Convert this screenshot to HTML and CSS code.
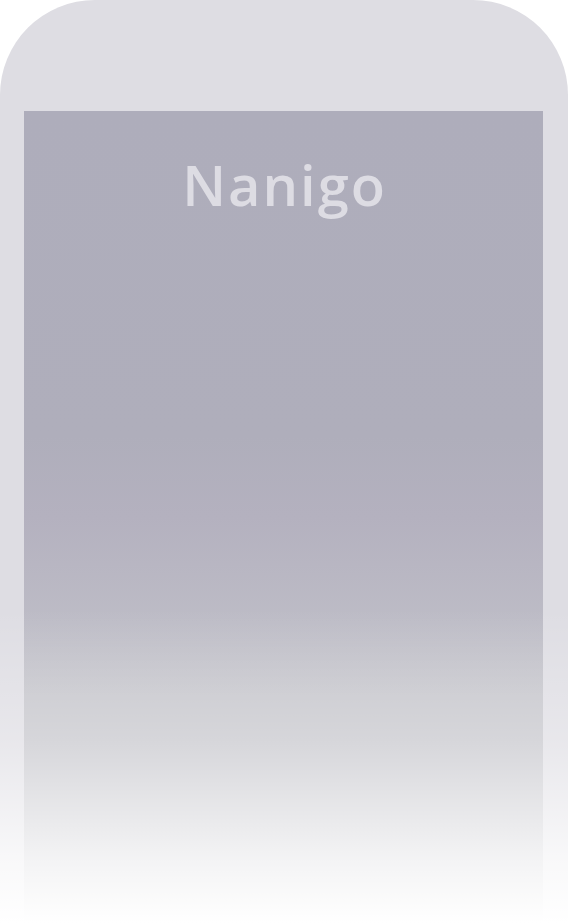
FILE: index.html
```html
<!DOCTYPE html>
<html lang="en">
<head>
<meta charset="utf-8">
<title>Nanigo</title>
<link rel="stylesheet" href="styles.css">
</head>
<body>
<div class="device">
  <div class="screen">
    <h1 class="brand">Nanigo</h1>
  </div>
  <div class="fade"></div>
</div>
</body>
</html>
```
FILE: styles.css
```css
html, body {
  margin: 0;
  padding: 0;
  background: #ffffff;
}
body {
  width: 570px;
  height: 923px;
  overflow: hidden;
}
.device {
  position: relative;
  width: 568px;
  height: 923px;
  box-sizing: border-box;
  padding: 111px 25px 0 24px;
  background: #dedde3;
  border-radius: 95px 95px 0 0;
  display: flex;
}
.screen {
  flex: 1;
  background: linear-gradient(to bottom, #aeadbb 0%, #afaebb 40%, #b4b1bf 50%, #bdbcc6 63%, #c4c4ca 72%, #c4c4ca 100%);
  display: flex;
  flex-direction: column;
  align-items: center;
}
.brand {
  margin: 45px 0 0 2px;
  font-family: "Open Sans", "DejaVu Sans", sans-serif;
  font-weight: 600;
  font-size: 56px;
  line-height: 56px;
  letter-spacing: 2px;
  color: #dddce3;
}
.fade {
  position: absolute;
  left: 0;
  top: 0;
  right: 0;
  bottom: 0;
  background: linear-gradient(to bottom, rgba(255,255,255,0) 0%, rgba(255,255,255,0) 66%, rgba(255,255,255,0.3) 80%, rgba(255,255,255,0.8) 93%, rgba(255,255,255,1) 100%);
  pointer-events: none;
}
```
